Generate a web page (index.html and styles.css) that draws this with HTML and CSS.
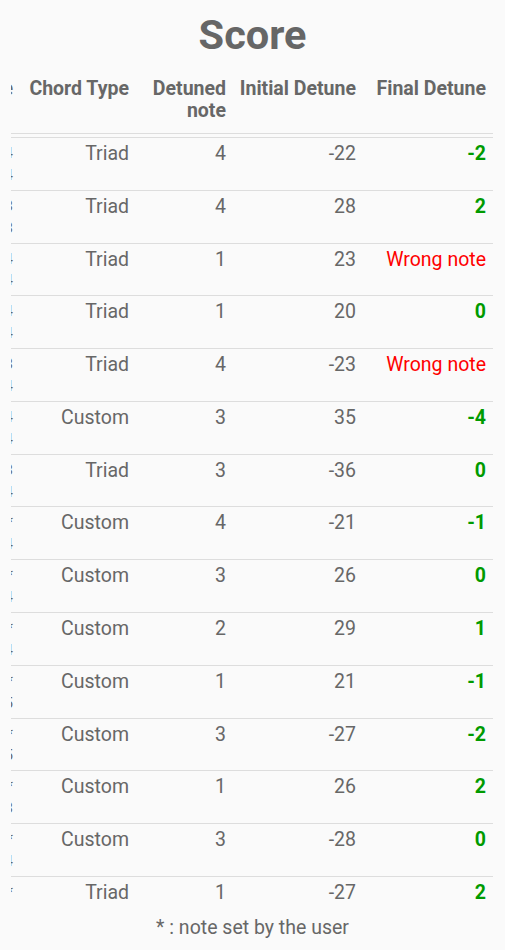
FILE: index.html
```html
<!DOCTYPE html>
<html lang="en">
<head>
<meta charset="utf-8">
<title>Score</title>
<link rel="stylesheet" href="styles.css">
</head>
<body>
<h1 class="title">Score</h1>
<div class="scroller">
  <table class="score">
    <colgroup>
      <col class="c-note"><col class="c-type"><col class="c-det"><col class="c-init"><col class="c-final">
    </colgroup>
    <thead>
      <tr><th>Note</th><th>Chord Type</th><th>Detuned note</th><th>Initial Detune</th><th>Final Detune</th></tr>
    </thead>
    <tbody>
      <tr><td class="note">C4<br>E4</td><td>Triad</td><td>4</td><td>-22</td><td class="ok">-2</td></tr>
      <tr><td class="note">G3<br>B3</td><td>Triad</td><td>4</td><td>28</td><td class="ok">2</td></tr>
      <tr><td class="note">F4<br>A4</td><td>Triad</td><td>1</td><td>23</td><td class="bad">Wrong note</td></tr>
      <tr><td class="note">D4<br>F#4</td><td>Triad</td><td>1</td><td>20</td><td class="ok">0</td></tr>
      <tr><td class="note">A3<br>C#4</td><td>Triad</td><td>4</td><td>-23</td><td class="bad">Wrong note</td></tr>
      <tr><td class="note">E4<br>G#4</td><td>Custom</td><td>3</td><td>35</td><td class="ok">-4</td></tr>
      <tr><td class="note">B3<br>D#4</td><td>Triad</td><td>3</td><td>-36</td><td class="ok">0</td></tr>
      <tr><td class="note">C4 *<br>G4</td><td>Custom</td><td>4</td><td>-21</td><td class="ok">-1</td></tr>
      <tr><td class="note">D4 *<br>A4</td><td>Custom</td><td>3</td><td>26</td><td class="ok">0</td></tr>
      <tr><td class="note">F3 *<br>C4</td><td>Custom</td><td>2</td><td>29</td><td class="ok">1</td></tr>
      <tr><td class="note">G4 *<br>D5</td><td>Custom</td><td>1</td><td>21</td><td class="ok">-1</td></tr>
      <tr><td class="note">A4 *<br>E5</td><td>Custom</td><td>3</td><td>-27</td><td class="ok">-2</td></tr>
      <tr><td class="note">E3 *<br>B3</td><td>Custom</td><td>1</td><td>26</td><td class="ok">2</td></tr>
      <tr><td class="note">B3 *<br>F#4</td><td>Custom</td><td>3</td><td>-28</td><td class="ok">0</td></tr>
      <tr class="last"><td class="note">C4 *</td><td>Triad</td><td>1</td><td>-27</td><td class="ok">2</td></tr>
    </tbody>
  </table>
</div>
<p class="footnote">* : note set by the user</p>
</body>
</html>
```
FILE: styles.css
```css
html, body {
  margin: 0;
  padding: 0;
  background: #fafafa;
}
body {
  font-family: Roboto, "Noto Sans", sans-serif;
  color: #676767;
  font-size: 19.5px;
  line-height: 22px;
}
.title {
  margin: 11px 0 0;
  font-size: 41.5px;
  line-height: 48px;
  font-weight: 700;
  text-align: center;
  color: #666666;
}
.scroller {
  margin: 11px 12px 0 11px;
  overflow-x: auto;
  direction: rtl;
  scrollbar-width: none;
}
.scroller::-webkit-scrollbar {
  display: none;
}
.score {
  direction: ltr;
  table-layout: fixed;
  width: 533px;
  border-collapse: collapse;
}
.c-note { width: 60px; }
.c-type { width: 116px; }
.c-det { width: 97px; }
.c-init { width: 130px; }
.c-final { width: 130px; }
.score th {
  font-weight: 700;
  text-align: right;
  vertical-align: top;
  padding: 8px 7px 15px 0;
  border-bottom: 1px solid #dddddd;
  background: linear-gradient(#dddddd, #dddddd) left 0 bottom 3px / 100% 1px no-repeat;
}
.score td {
  text-align: right;
  vertical-align: top;
  padding: 5px 7px 3px 0;
  border-bottom: 1px solid #dddddd;
  font-weight: 400;
}
.score td.note {
  line-height: 21.885px;
  font-size: 15px;
}
.score tr.last td {
  border-bottom: none;
}
.score td.ok {
  color: #009a00;
  font-weight: 700;
}
.score td.bad {
  color: #ff0000;
}
.footnote {
  margin: 10px 0 0;
  text-align: center;
}
```
